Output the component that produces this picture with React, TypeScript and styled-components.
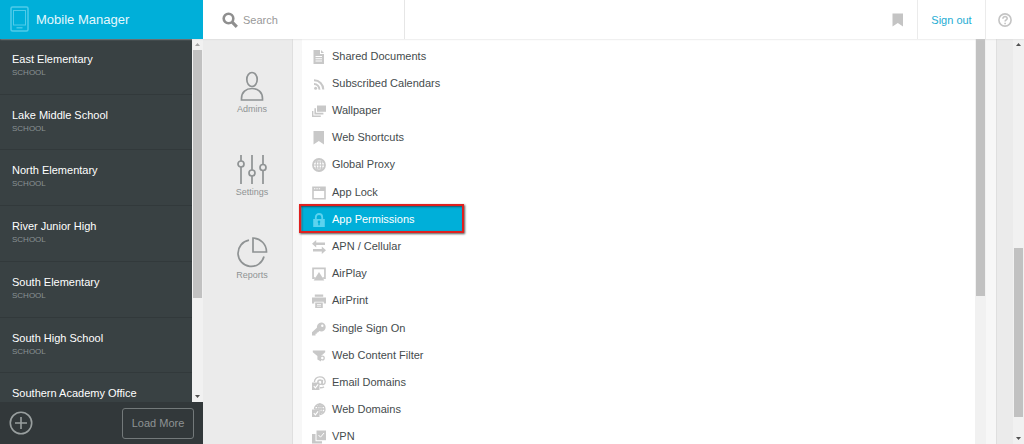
import React from 'react';
import styled, { createGlobalStyle, css } from 'styled-components';

const GlobalStyle = createGlobalStyle`
  *, *::before, *::after { box-sizing: border-box; }
  body {
    margin: 0;
    overflow: hidden;
    background: #ebebeb;
    font-family: "Liberation Sans", Arial, sans-serif;
    font-size: 11px;
    line-height: 14px;
  }
  button, input { font: inherit; }
  a { text-decoration: none; }
`;

const Page = styled.div`
  display: flex;
  flex-direction: column;
  height: 100vh;
`;

const Header = styled.header`
  display: flex;
  flex: none;
  height: 39px;
  background: #fff;
  position: relative;
  z-index: 1;
  box-shadow: 0 0 2px #cfcfcf;
`;

const Brand = styled.a`
  display: flex;
  align-items: center;
  gap: 7px;
  width: 203px;
  padding-left: 10px;
  background: #00afd9;
  color: #e4f8fd;
  font-size: 13px;
`;

const SearchBox = styled.label`
  display: flex;
  align-items: center;
  gap: 5px;
  width: 202px;
  padding-left: 19px;
  border-right: 1px solid #e6e6e6;
  color: #8f8f8f;
`;

const SearchInput = styled.input`
  width: 140px;
  padding: 0;
  border: 0;
  outline: 0;
  background: transparent;
  color: #555;
  &::placeholder { color: #999; opacity: 1; }
`;

const HeaderActions = styled.nav`
  display: flex;
  margin-left: auto;
`;

const headerItem = css`
  display: flex;
  align-items: center;
  justify-content: center;
  border: 0;
  padding: 0;
  background: none;
  color: #c4c4c4;
`;

const IconButton = styled.button<{ $width: number }>`
  ${headerItem}
  width: ${(p) => p.$width}px;
`;

const SignOut = styled.a`
  ${headerItem}
  width: 69px;
  border: solid #ebebeb;
  border-width: 0 1px;
  color: #24acd3;
`;

const Body = styled.div`
  display: flex;
  flex: 1;
  min-height: 0;
`;

const Sidebar = styled.aside`
  display: flex;
  flex-direction: column;
  width: 203px;
  flex: none;
  background: #394143;
`;

const SchoolArea = styled.div`
  display: flex;
  flex: 1;
  min-height: 0;
  overflow: hidden;
`;

const SchoolList = styled.ul`
  flex: 1;
  display: grid;
  grid-auto-rows: 1fr;
  height: 390px;
  margin: 0;
  padding: 0;
  list-style: none;
`;

const School = styled.li`
  border-bottom: 1px solid #32393b;
`;

const SchoolLink = styled.a`
  display: block;
  padding: 13px 12px 0;
  color: #fff;
`;

const SchoolKind = styled.small`
  display: block;
  color: #899193;
  font-size: 8px;
`;

const SidebarFooter = styled.footer`
  display: flex;
  align-items: center;
  justify-content: space-between;
  height: 42px;
  flex: none;
  padding: 0 9px;
  background: #32383a;
`;

const AddButton = styled.button`
  display: flex;
  padding: 0;
  border: 0;
  background: none;
  color: #999f9f;
`;

const LoadMore = styled.button`
  width: 72px;
  height: 31px;
  padding: 0;
  border: 1px solid #73797a;
  border-radius: 3px;
  background: none;
  color: #8e9394;
`;

const Track = styled.div`
  display: flex;
  flex-direction: column;
  align-items: center;
  width: 11px;
  flex: none;
  background: #f1f1f1;
`;

const Arrow = styled.span<{ $down?: boolean; $faint?: boolean }>`
  display: flex;
  align-items: center;
  justify-content: center;
  height: 11px;
  flex: none;
  color: ${(p) => (p.$faint ? '#a3a3a3' : '#505050')};
  ${(p) => p.$down && 'margin-top: auto; transform: rotate(180deg);'}
`;

const Thumb = styled.span<{ $top?: number; $length: number }>`
  width: 9px;
  height: ${(p) => p.$length}px;
  margin-top: ${(p) => p.$top ?? 0}px;
  flex: none;
  background: #c1c1c1;
`;

const Rail = styled.nav`
  display: flex;
  flex-direction: column;
  align-items: center;
  gap: 37px;
  width: 90px;
  flex: none;
  padding: 31px 0 0 9px;
  border-right: 1px solid #dfdfdf;
  background: #ebebeb;
`;

const RailLink = styled.a`
  display: flex;
  flex-direction: column;
  align-items: center;
  height: 46px;
  color: #8f9394;
  font-size: 9px;
  line-height: 12px;
`;

const Content = styled.main`
  display: flex;
  flex: 1;
  min-width: 0;
  padding: 0 10px 0 9px;
  background: #f7f7f7;
`;

const Panel = styled.section`
  display: flex;
  flex: 1;
  min-width: 0;
  overflow: hidden;
  margin-left: -4px;
  padding-left: 4px;
`;

const Menu = styled.ul`
  flex: 1;
  display: grid;
  grid-auto-rows: 1fr;
  align-content: start;
  height: 411px;
  margin: 0;
  padding: 3px 0 0;
  list-style: none;
  background: #fff;
`;

const MenuLink = styled.a<{ $active?: boolean }>`
  display: flex;
  align-items: center;
  gap: 6px;
  height: 100%;
  padding-left: 10px;
  color: #454b4d;
  svg { color: #c8c8c8; flex: none; position: relative; top: 1px; }
  ${(p) =>
    p.$active &&
    css`
      position: relative;
      width: 161px;
      background: #00afd9;
      color: #fff;
      svg { color: #5bd3ef; }
      &::after {
        content: "";
        position: absolute;
        inset: -1px -1px -1px -3px;
        border: 2px solid #e0201f;
        box-shadow: 1px 1px 2px #555, inset 1px 1px 2px #17546a;
      }
    `}
`;

const Gutter = styled.div`
  width: 17px;
  flex: none;
  border-left: 1px solid #dfdfdf;
  background: #ebebeb;
`;

const Glyph = ({ children, size = 14 }: { children: React.ReactNode; size?: number }) => (
  <svg width={size} height={size} viewBox="0 0 14 14" fill="currentColor" aria-hidden="true">
    {children}
  </svg>
);

const line = { fill: 'none', stroke: 'currentColor' };

const Globe = () => (
  <g {...line}>
    <circle cx="7" cy="7" r="6" strokeWidth="1.8" />
    <ellipse cx="7" cy="7" rx="2.8" ry="6" strokeWidth="1.2" />
    <path d="M7 1v12M1 7h12M2 4h10M2 10h10" strokeWidth="1.2" />
  </g>
);

const CheckBadge = () => (
  <>
    <path d="M0 6.5h7.5V14H0z" />
    <path d="M1.8 10.2l1.6 1.7 2.7-3.5" fill="none" stroke="#fff" strokeWidth="1.1" />
  </>
);

const menuItems: { label: string; icon: React.ReactNode; active?: boolean }[] = [
  {
    label: 'Shared Documents',
    icon: (
      <>
        <path fillRule="evenodd" d="M1.5 0H8v4h4v10H1.5zM3.5 6v1h6.5V6zm0 2.3v1H10v-1zm0 2.3v1H10v-1z" />
        <path d="M9 0l3 3H9z" />
      </>
    ),
  },
  {
    label: 'Subscribed Calendars',
    icon: (
      <>
        <circle cx="3.6" cy="11.2" r="1.5" />
        <path {...line} strokeWidth="2" d="M2 7a5.4 5.4 0 0 1 5.4 5.6M2 3.3a9.2 9.2 0 0 1 9.3 9.3" />
      </>
    ),
  },
  {
    label: 'Wallpaper',
    icon: (
      <>
        <path d="M5 1.5h9v6.3H5z" />
        <path d="M2.4 4.2H4v4.6h7.4v1.7h-9z" />
        <path d="M0 7h1.4v4.5h7.4V13H0z" />
      </>
    ),
  },
  { label: 'Web Shortcuts', icon: <path d="M1.5 0h10.5v13.5L6.8 10l-5.3 3.5z" /> },
  { label: 'Global Proxy', icon: <Globe /> },
  {
    label: 'App Lock',
    icon: (
      <path
        fillRule="evenodd"
        d="M.2.5h13.600v13H.2zM1.800 5v7h10.400V5zM2 2.200v1.100h1.300V2.200zm2.400 0v1.100h1.300V2.200zm2.400 0v1.100h1.300V2.200z"
      />
    ),
  },
  {
    label: 'App Permissions',
    active: true,
    icon: (
      <>
        <path {...line} strokeWidth="1.8" d="M3.8 7V4.2a3.2 3.2 0 0 1 6.4 0V7" />
        <path fillRule="evenodd" d="M1.2 6h11.6v8H1.2zM7 7.5a1.3 1.3 0 0 0-.7 2.4V12.3h1.4V9.9A1.3 1.3 0 0 0 7 7.5z" />
      </>
    ),
  },
  {
    label: 'APN / Cellular',
    icon: <path d="M4.200 0v2.500H13v2.600H4.200v2.400L0 3.800zM9.800 6.500v2.400H1v2.600h8.800V14l4.200-3.700z" />,
  },
  {
    label: 'AirPlay',
    icon: (
      <>
        <path d="M.2.5h13.600v11.500h-2.300l-1.300-1.800h1.900V2.300H1.900v7.900h1.900L2.500 12H.2z" />
        <path d="M7 5l5.300 8.500H1.700z" />
      </>
    ),
  },
  {
    label: 'AirPrint',
    icon: (
      <>
        <path d="M2.800.5h8.400v2.300H2.800zM0 3.600h14v6h-2.300V7.800H2.300v1.800H0z" />
        <path fillRule="evenodd" d="M3.200 8.500h7.600V14H3.200zM5 10v.8h4V10zm0 1.700v.8h4v-.8z" />
      </>
    ),
  },
  {
    label: 'Single Sign On',
    icon: (
      <path
        fillRule="evenodd"
        d="M9.2.5a4.500 4.500 0 0 1 0 9 5 5 0 0 1-1.900-.4L6 10.400H4.800v1.400H3.500v1.700H0v-3.300l4.900-4.500A4.500 4.500 0 0 1 9.200.5zM10.300 2.500a1.200 1.200 0 1 0 0 2.400 1.200 1.200 0 0 0 0-2.400z"
      />
    ),
  },
  {
    label: 'Web Content Filter',
    icon: (
      <>
        <path d="M.8 1.500h12.400v1.800L9 7v5.600l-3.600-2V7L.8 3.300z" />
        <circle cx="10.300" cy="9" r="1.900" {...line} strokeWidth="1.300" />
      </>
    ),
  },
  {
    label: 'Email Domains',
    icon: (
      <>
        <g {...line} strokeWidth="1.4">
          <circle cx="8" cy="6.2" r="2.2" />
          <path d="M10.6 3.8l-.6 4c0 1.4 3.2.8 3.2-2.3A5.4 5.4 0 0 0 7.8.9 5.3 5.3 0 0 0 2.4 6M8 11.8c1.5.1 2.8-.2 4-1" />
        </g>
        <CheckBadge />
      </>
    ),
  },
  {
    label: 'Web Domains',
    icon: (
      <>
        <g {...line} strokeWidth="1.300">
          <path d="M2.4 6A5.3 5.3 0 1 1 8 11.6M8 .9v10.7M2.5 6h10.8M3.5 3.3h9M8 9h4.6" />
          <path d="M5.6 6C5.6 3.5 6.4 2 8 .9c3.2 3 3.2 7.6 0 10.7" />
        </g>
        <CheckBadge />
      </>
    ),
  },
  {
    label: 'VPN',
    icon: (
      <>
        <path d="M4.5.5H14v9.7H4.5z" />
        <path d="M0 4h3.5v7.2H10V13.5H0z" />
        <path d="M6.5 5l2 2.2L12 3" fill="none" stroke="#fff" />
      </>
    ),
  },
];

const schools: { name: string; kind?: string }[] = [
  { name: 'East Elementary', kind: 'SCHOOL' },
  { name: 'Lake Middle School', kind: 'SCHOOL' },
  { name: 'North Elementary', kind: 'SCHOOL' },
  { name: 'River Junior High', kind: 'SCHOOL' },
  { name: 'South Elementary', kind: 'SCHOOL' },
  { name: 'South High School', kind: 'SCHOOL' },
  { name: 'Southern Academy Office' },
];

const railItems = [
  {
    label: 'Admins',
    icon: (
      <>
        <ellipse cx="16" cy="9.5" rx="5.2" ry="7" />
        <path d="M5.5 30v-1.5C5.5 22 10 18.500 16 18.500S26.500 22 26.500 28.500V30z" />
      </>
    ),
  },
  {
    label: 'Settings',
    icon: (
      <>
        <path d="M5 2v6M5 14v17M16 2v15M16 23v8M27 2v9.500M27 17.500V31" />
        <circle cx="5" cy="11" r="3" />
        <circle cx="16" cy="20" r="3" />
        <circle cx="27" cy="14.500" r="3" />
      </>
    ),
  },
  {
    label: 'Reports',
    icon: (
      <>
        <path d="M13 4.200A13.200 13.200 0 1 0 28 20.500" />
        <path d="M17 2v14h13.500A13.800 13.800 0 0 0 17 2z" />
      </>
    ),
  },
];

const ArrowMark = () => (
  <svg width="5" height="3" viewBox="0 0 5 3" fill="currentColor" aria-hidden="true">
    <path d="M2.500 0L5 3H0z" />
  </svg>
);

export default function App() {
  return (
    <Page>
      <GlobalStyle />
      <Header>
        <Brand href="#">
          <svg width="19" height="27" viewBox="0 0 19 27" fill="none" stroke="#4fcbe9" aria-hidden="true">
            <rect x="1" y="1" width="17" height="24" rx="1.500" strokeWidth="1.500" />
            <rect x="3.500" y="4.500" width="12" height="14.500" />
            <path d="M6.500 21.800h6" strokeWidth="1.300" />
          </svg>
          Mobile Manager
        </Brand>
        <SearchBox>
          <svg width="16" height="16" viewBox="0 0 16 16" fill="none" stroke="currentColor" aria-hidden="true">
            <circle cx="6.500" cy="6.500" r="4.800" strokeWidth="2.600" />
            <path d="M10.200 10.200l4.600 4.600" strokeWidth="3.200" />
          </svg>
          <SearchInput type="text" placeholder="Search" aria-label="Search" />
        </SearchBox>
        <HeaderActions>
          <IconButton $width={39} aria-label="Bookmarks">
            <Glyph><path d="M1.500.500h10.500v13L6.800 10l-5.300 3.500z" /></Glyph>
          </IconButton>
          <SignOut href="#">Sign out</SignOut>
          <IconButton $width={38} aria-label="Help">
            <Glyph>
              <g {...line} strokeWidth="1.600">
                <circle cx="7" cy="7" r="6.100" />
                <path d="M4.900 5.700c0-3 4.400-2.700 4.300-.2C9.200 7 7.100 6.800 7.100 8.600M7.100 9.700v1.500" />
              </g>
            </Glyph>
          </IconButton>
        </HeaderActions>
      </Header>
      <Body>
        <Sidebar>
          <SchoolArea>
            <SchoolList>
              {schools.map(({ name, kind }) => (
                <School key={name}>
                  <SchoolLink href="#">
                    {name}
                    {kind && <SchoolKind>{kind}</SchoolKind>}
                  </SchoolLink>
                </School>
              ))}
            </SchoolList>
            <Track>
              <Arrow $faint><ArrowMark /></Arrow>
              <Thumb $length={248} />
              <Arrow $down><ArrowMark /></Arrow>
            </Track>
          </SchoolArea>
          <SidebarFooter>
            <AddButton aria-label="Add">
              <svg width="24" height="24" viewBox="0 0 24 24" fill="none" stroke="currentColor" strokeWidth="1.600" aria-hidden="true">
                <circle cx="12" cy="12" r="10.700" />
                <path d="M12 6v12M6 12h12" />
              </svg>
            </AddButton>
            <LoadMore>Load More</LoadMore>
          </SidebarFooter>
        </Sidebar>
        <Rail>
          {railItems.map((item) => (
            <RailLink href="#" key={item.label}>
              <svg width="32" height="33" viewBox="0 0 32 33" fill="none" stroke="currentColor" strokeWidth="1.700" aria-hidden="true">
                {item.icon}
              </svg>
              {item.label}
            </RailLink>
          ))}
        </Rail>
        <Content>
          <Panel>
            <Menu>
              {menuItems.map((item) => (
                <li key={item.label}>
                  <MenuLink href="#" $active={item.active}>
                    <Glyph>{item.icon}</Glyph>
                    {item.label}
                  </MenuLink>
                </li>
              ))}
            </Menu>
            <Track>
              <Thumb $length={257} />
            </Track>
          </Panel>
        </Content>
        <Gutter />
        <Track>
          <Arrow><ArrowMark /></Arrow>
          <Thumb $top={198} $length={169} />
          <Arrow $down><ArrowMark /></Arrow>
        </Track>
      </Body>
    </Page>
  );
}
